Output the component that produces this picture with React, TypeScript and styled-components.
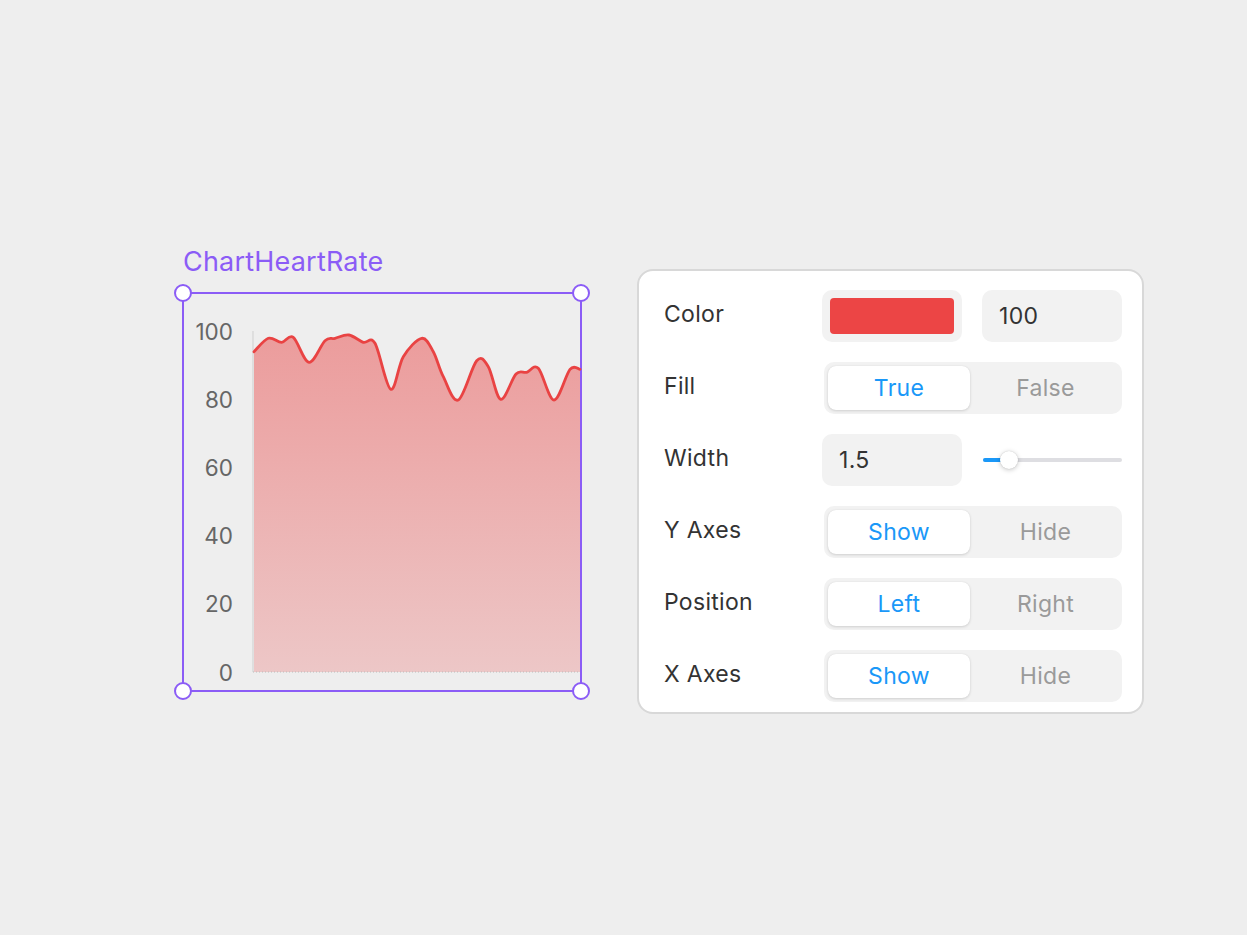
import React from "react";
import styled, { createGlobalStyle } from "styled-components";

const GlobalStyle = createGlobalStyle`
  html, body {
    margin: 0;
    padding: 0;
    background: #eeeeee;
    font-family: Inter, "Open Sans", "Liberation Sans", sans-serif;
  }
  * { box-sizing: border-box; }
`;

const PURPLE = "#8b5cf6";
const BLUE = "#1a98f8";
const RED = "#e94343";

const Stage = styled.div`
  display: flex;
  align-items: flex-start;
  gap: 55px;
  min-height: 935px;
  padding: 247px 0 0 182px;
`;

const ChartBlock = styled.div`
  display: flex;
  flex-direction: column;
  width: 400px;
`;

const ChartTitle = styled.div`
  color: ${PURPLE};
  font-size: 27px;
  line-height: 30px;
  height: 30px;
  margin: 0 0 15px 1px;
  letter-spacing: 0.2px;
`;

const SelectionBox = styled.div`
  position: relative;
  width: 400px;
  height: 400px;
  border: 2px solid ${PURPLE};
`;

const Handle = styled.span<{ $v: "top" | "bottom"; $h: "left" | "right" }>`
  position: absolute;
  ${(p) => p.$v}: -10px;
  ${(p) => p.$h}: -10px;
  width: 18px;
  height: 18px;
  border-radius: 50%;
  background: #ffffff;
  border: 2px solid ${PURPLE};
  z-index: 2;
`;

const ChartSvg = styled.svg`
  display: block;
  width: 396px;
  height: 396px;
  overflow: visible;
`;

const AxisLabel = styled.text`
  font-family: Inter, "Open Sans", "Liberation Sans", sans-serif;
  font-size: 22.5px;
  fill: #666666;
`;

const Panel = styled.div`
  margin-top: 22px;
  width: 507px;
  background: #ffffff;
  border: 2px solid #d8d8d8;
  border-radius: 16px;
  padding: 9px 19px 0 25px;
  display: flex;
  flex-direction: column;
`;

const Row = styled.div`
  display: grid;
  grid-template-columns: 158px 300px;
  align-items: center;
  height: 72px;
`;

const Label = styled.div`
  font-size: 23px;
  color: #333333;
  letter-spacing: 0.3px;
  padding-bottom: 4px;
`;

const Pair = styled.div`
  display: grid;
  grid-template-columns: 140px 140px;
  gap: 20px;
  align-items: center;
`;

const SwatchWell = styled.div`
  height: 52px;
  border-radius: 10px;
  background: #f2f2f2;
  padding: 8px;
`;

const Swatch = styled.div<{ $color: string }>`
  width: 100%;
  height: 100%;
  border-radius: 4px;
  background: ${(p) => p.$color};
`;

const Field = styled.div`
  height: 52px;
  border-radius: 10px;
  background: #f2f2f2;
  display: flex;
  align-items: center;
  padding-left: 17px;
  font-size: 23px;
  letter-spacing: 0.3px;
  color: #333333;
`;

const Segmented = styled.div`
  display: grid;
  grid-template-columns: 1fr 1fr;
  height: 52px;
  margin-left: 2px;
  padding: 4px;
  border-radius: 10px;
  background: #f2f2f2;
`;

const Segment = styled.div<{ $active?: boolean }>`
  display: flex;
  align-items: center;
  justify-content: center;
  border-radius: 8px;
  font-size: 23px;
  letter-spacing: 0.3px;
  color: ${(p) => (p.$active ? BLUE : "#9a9a9a")};
  background: ${(p) => (p.$active ? "#ffffff" : "transparent")};
  box-shadow: ${(p) =>
    p.$active ? "0 1px 3px rgba(0,0,0,0.14), 0 0 1px rgba(0,0,0,0.1)" : "none"};
  margin-right: ${(p) => (p.$active ? "3px" : "0")};
`;

const SliderTrack = styled.div`
  position: relative;
  height: 4px;
  border-radius: 2px;
  background: #dedee2;
  margin-left: 1px;
`;

const SliderFill = styled.div`
  height: 100%;
  border-radius: 2px;
  background: ${BLUE};
`;

const SliderThumb = styled.div`
  position: absolute;
  top: 50%;
  width: 18px;
  height: 18px;
  margin: -9px 0 0 -9px;
  border-radius: 50%;
  background: #ffffff;
  box-shadow: 0 1px 5px rgba(0, 0, 0, 0.22), 0 0 1px rgba(0, 0, 0, 0.2);
`;

type Pt = [number, number];

const points: Pt[] = [
  [70, 57.7],
  [84.3, 44.3],
  [97.7, 48.3],
  [109.3, 43.3],
  [125, 68.3],
  [141, 46.7],
  [151, 44.3],
  [165, 41],
  [179.3, 48.3],
  [191, 49.3],
  [206.7, 95.3],
  [219.3, 62.7],
  [237.7, 44.3],
  [249.3, 57.7],
  [259.3, 82.7],
  [274.3, 106],
  [292.7, 66.7],
  [304.3, 72.7],
  [316.7, 105.3],
  [332, 80],
  [342.7, 78.3],
  [354.3, 74.3],
  [370, 106],
  [386, 75.3],
  [396, 75.3],
];

function smoothPath(pts: Pt[]): string {
  let d = `M${pts[0][0]},${pts[0][1]}`;
  for (let i = 0; i < pts.length - 1; i++) {
    const p0 = pts[i - 1] || pts[i];
    const p1 = pts[i];
    const p2 = pts[i + 1];
    const p3 = pts[i + 2] || p2;
    const c1x = p1[0] + (p2[0] - p0[0]) / 6;
    const c1y = p1[1] + (p2[1] - p0[1]) / 6;
    const c2x = p2[0] - (p3[0] - p1[0]) / 6;
    const c2y = p2[1] - (p3[1] - p1[1]) / 6;
    d += ` C${c1x.toFixed(1)},${c1y.toFixed(1)} ${c2x.toFixed(1)},${c2y.toFixed(1)} ${p2[0]},${p2[1]}`;
  }
  return d;
}

const AXIS_X = 69;
const TOP_Y = 37;
const BOTTOM_Y = 378;

function HeartRateChart() {
  const line = smoothPath(points);
  const area = `${line} L396,${BOTTOM_Y} L${points[0][0]},${BOTTOM_Y} Z`;
  const ticks = [100, 80, 60, 40, 20, 0];
  return (
    <ChartSvg viewBox="0 0 396 396">
      <defs>
        <linearGradient id="hrFill" x1="0" y1="0" x2="0" y2="1">
          <stop offset="0%" stopColor={RED} stopOpacity={0.48} />
          <stop offset="100%" stopColor={RED} stopOpacity={0.23} />
        </linearGradient>
      </defs>
      {ticks.map((t, i) => (
        <AxisLabel
          key={t}
          x={49}
          y={TOP_Y + i * 68.2}
          textAnchor="end"
          dominantBaseline="central"
        >
          {t}
        </AxisLabel>
      ))}
      <path d={area} fill="url(#hrFill)" />
      <line x1={AXIS_X} y1={TOP_Y} x2={AXIS_X} y2={BOTTOM_Y} stroke="#cfcfcf" strokeWidth={1} />
      <line
        x1={AXIS_X}
        y1={BOTTOM_Y}
        x2={396}
        y2={BOTTOM_Y}
        stroke="#bbbbbb"
        strokeWidth={1}
        strokeDasharray="1 2"
      />
      <path d={line} fill="none" stroke={RED} strokeWidth={2.8} strokeLinejoin="round" strokeLinecap="round" />
    </ChartSvg>
  );
}

function Toggle({ options, active }: { options: [string, string]; active: number }) {
  return (
    <Segmented>
      {options.map((o, i) => (
        <Segment key={o} $active={i === active}>
          {o}
        </Segment>
      ))}
    </Segmented>
  );
}

function Slider({ pct }: { pct: number }) {
  return (
    <SliderTrack>
      <SliderFill style={{ width: `${pct}%` }} />
      <SliderThumb style={{ left: `${pct}%` }} />
    </SliderTrack>
  );
}

export default function App() {
  return (
    <>
      <GlobalStyle />
      <Stage>
        <ChartBlock>
          <ChartTitle>ChartHeartRate</ChartTitle>
          <SelectionBox>
            <Handle $v="top" $h="left" />
            <Handle $v="top" $h="right" />
            <Handle $v="bottom" $h="left" />
            <Handle $v="bottom" $h="right" />
            <HeartRateChart />
          </SelectionBox>
        </ChartBlock>
        <Panel>
          <Row>
            <Label>Color</Label>
            <Pair>
              <SwatchWell>
                <Swatch $color="#ec4545" />
              </SwatchWell>
              <Field>100</Field>
            </Pair>
          </Row>
          <Row>
            <Label>Fill</Label>
            <Toggle options={["True", "False"]} active={0} />
          </Row>
          <Row>
            <Label>Width</Label>
            <Pair>
              <Field>1.5</Field>
              <Slider pct={19} />
            </Pair>
          </Row>
          <Row>
            <Label>Y Axes</Label>
            <Toggle options={["Show", "Hide"]} active={0} />
          </Row>
          <Row>
            <Label>Position</Label>
            <Toggle options={["Left", "Right"]} active={0} />
          </Row>
          <Row>
            <Label>X Axes</Label>
            <Toggle options={["Show", "Hide"]} active={0} />
          </Row>
        </Panel>
      </Stage>
    </>
  );
}
